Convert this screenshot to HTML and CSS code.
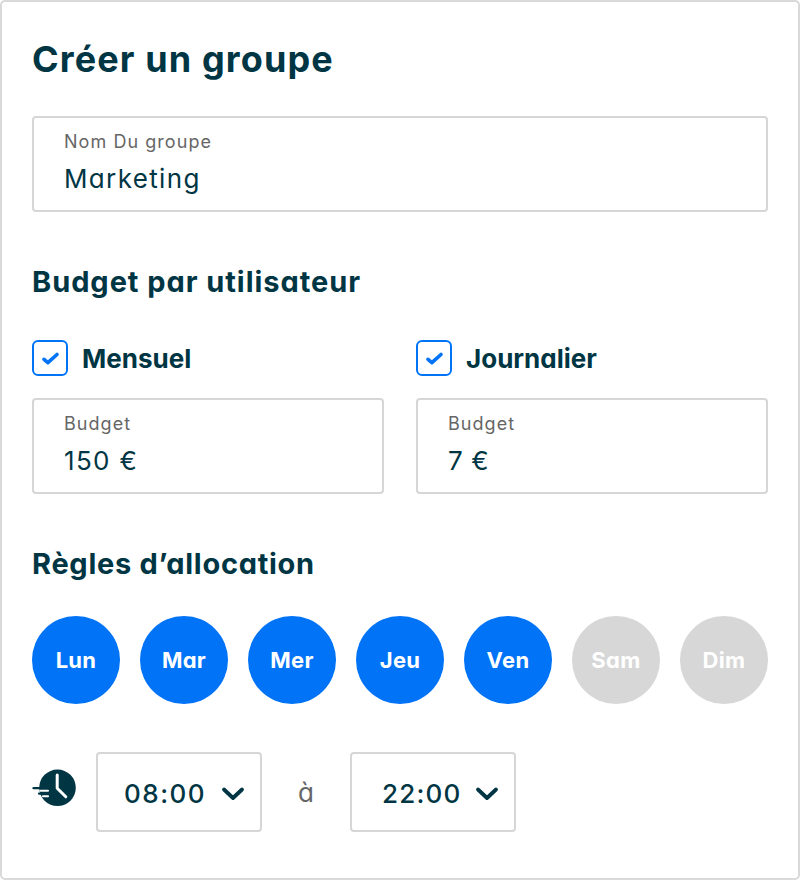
FILE: index.html
```html
<!DOCTYPE html>
<html lang="fr">
<head>
<meta charset="utf-8">
<title>Créer un groupe</title>
<link rel="stylesheet" href="styles.css">
</head>
<body>
<main class="card">
  <h1 class="title">Créer un groupe</h1>
  <div class="field">
    <span class="field-label">Nom Du groupe</span>
    <span class="field-value">Marketing</span>
  </div>

  <h2 class="section section-budget">Budget par utilisateur</h2>
  <div class="budgets">
    <div class="budget">
      <div class="check-row">
        <span class="checkbox"><svg viewBox="0 0 32 32"><path d="M10 17.3L13.9 20.7L23 12.5"/></svg></span>
        <span class="check-label">Mensuel</span>
      </div>
      <div class="field">
        <span class="field-label">Budget</span>
        <span class="field-value">150 €</span>
      </div>
    </div>
    <div class="budget">
      <div class="check-row">
        <span class="checkbox"><svg viewBox="0 0 32 32"><path d="M10 17.3L13.9 20.7L23 12.5"/></svg></span>
        <span class="check-label">Journalier</span>
      </div>
      <div class="field">
        <span class="field-label">Budget</span>
        <span class="field-value amount-short">7 €</span>
      </div>
    </div>
  </div>

  <h2 class="section section-rules">Règles d’allocation</h2>
  <div class="days">
    <span class="day">Lun</span>
    <span class="day">Mar</span>
    <span class="day">Mer</span>
    <span class="day">Jeu</span>
    <span class="day">Ven</span>
    <span class="day off">Sam</span>
    <span class="day off">Dim</span>
  </div>

  <div class="hours">
    <svg class="clock" viewBox="0 0 44 38">
      <circle class="clock-face" cx="25.5" cy="18.8" r="18.3"/>
      <path class="clock-speed" d="M1.5 19.2H15M7 24.6H15"/>
      <path class="clock-gap" d="M8.5 21.8H16M11 27.3H16"/>
      <path class="clock-hands" d="M25.2 6V19.2L33.8 27.8"/>
    </svg>
    <div class="select">
      <span class="time">08:00</span>
      <svg class="chevron" viewBox="0 0 24 16"><path d="M3 3.5L12 12L21 3.5"/></svg>
    </div>
    <span class="to">à</span>
    <div class="select select-end">
      <span class="time">22:00</span>
      <svg class="chevron" viewBox="0 0 24 16"><path d="M3 3.5L12 12L21 3.5"/></svg>
    </div>
  </div>
</main>
</body>
</html>
```
FILE: styles.css
```css
* { box-sizing: border-box; }
body {
  margin: 0;
  background: #fff;
  color: #003644;
  font-family: Inter, "Liberation Sans", sans-serif;
  font-feature-settings: "cv11";
}
.card {
  height: 880px;
  padding: 37px 30px 0;
  border: 2px solid #d9d9d9;
  border-radius: 5px;
}
.title {
  margin: 0 0 37px;
  font-size: 36px;
  line-height: 40px;
  font-weight: 650;
  letter-spacing: 1.12px;
}
.section {
  font-size: 29px;
  line-height: 36px;
  font-weight: 650;
  letter-spacing: 0.95px;
}
.section-budget { margin: 52px 0 40px; }
.section-rules { margin: 52px 0 34px; letter-spacing: 0.7px; }
.field {
  display: flex;
  flex-direction: column;
  height: 96px;
  padding: 12px 30px 0;
  border: 2px solid #d6d6d6;
  border-radius: 4px;
}
.field-label {
  font-size: 18px;
  line-height: 24px;
  letter-spacing: 1.05px;
  color: #666;
}
.field-value {
  margin-top: 9px;
  font-size: 26px;
  line-height: 32px;
  letter-spacing: 1.35px;
}
.amount-short { letter-spacing: 0.6px; }
.budgets {
  display: grid;
  grid-template-columns: 1fr 1fr;
  gap: 32px;
}
.check-row {
  display: flex;
  align-items: center;
  gap: 14px;
  height: 36px;
  margin-bottom: 22px;
}
.checkbox {
  width: 36px;
  height: 36px;
  border: 2px solid #0073f7;
  border-radius: 6px;
}
.checkbox svg { display: block; width: 32px; height: 32px; }
.checkbox path {
  fill: none;
  stroke: #0073f7;
  stroke-width: 3.6;
  stroke-linecap: round;
  stroke-linejoin: round;
}
.check-label {
  padding-top: 2px;
  font-size: 26px;
  line-height: 36px;
  font-weight: 650;
  letter-spacing: 0;
}
.days { display: flex; gap: 20px; }
.day {
  width: 88px;
  height: 88px;
  border-radius: 50%;
  background: #0073f7;
  color: #fff;
  font-size: 22px;
  line-height: 88px;
  font-weight: 650;
  letter-spacing: 0.3px;
  text-align: center;
}
.day.off { background: #d7d7d7; }
.hours {
  display: flex;
  align-items: center;
  margin-top: 48px;
}
.clock {
  width: 44px;
  height: 38px;
  margin: 0 20px 8px 0;
  fill: none;
}
.clock-face { fill: #003644; }
.clock-speed { stroke: #003644; stroke-width: 2.3; stroke-linecap: round; }
.clock-gap { stroke: #fff; stroke-width: 2.1; stroke-linecap: round; }
.clock-hands { stroke: #fff; stroke-width: 3; stroke-linecap: round; stroke-linejoin: round; }
.select {
  display: flex;
  align-items: center;
  justify-content: space-between;
  width: 166px;
  height: 80px;
  padding: 3px 15px 0 26px;
  border: 2px solid #d6d6d6;
  border-radius: 4px;
}
.select-end { padding-left: 30px; }
.time {
  font-size: 26px;
  line-height: 32px;
  font-weight: 500;
  letter-spacing: 1.5px;
}
.select-end .time { letter-spacing: 1.2px; }
.chevron {
  width: 24px;
  height: 16px;
  fill: none;
  stroke: #003644;
  stroke-width: 3.8;
  stroke-linecap: round;
  stroke-linejoin: round;
}
.to {
  width: 88px;
  padding-top: 2px;
  text-align: center;
  font-size: 26px;
  line-height: 32px;
  color: #666;
}
```
